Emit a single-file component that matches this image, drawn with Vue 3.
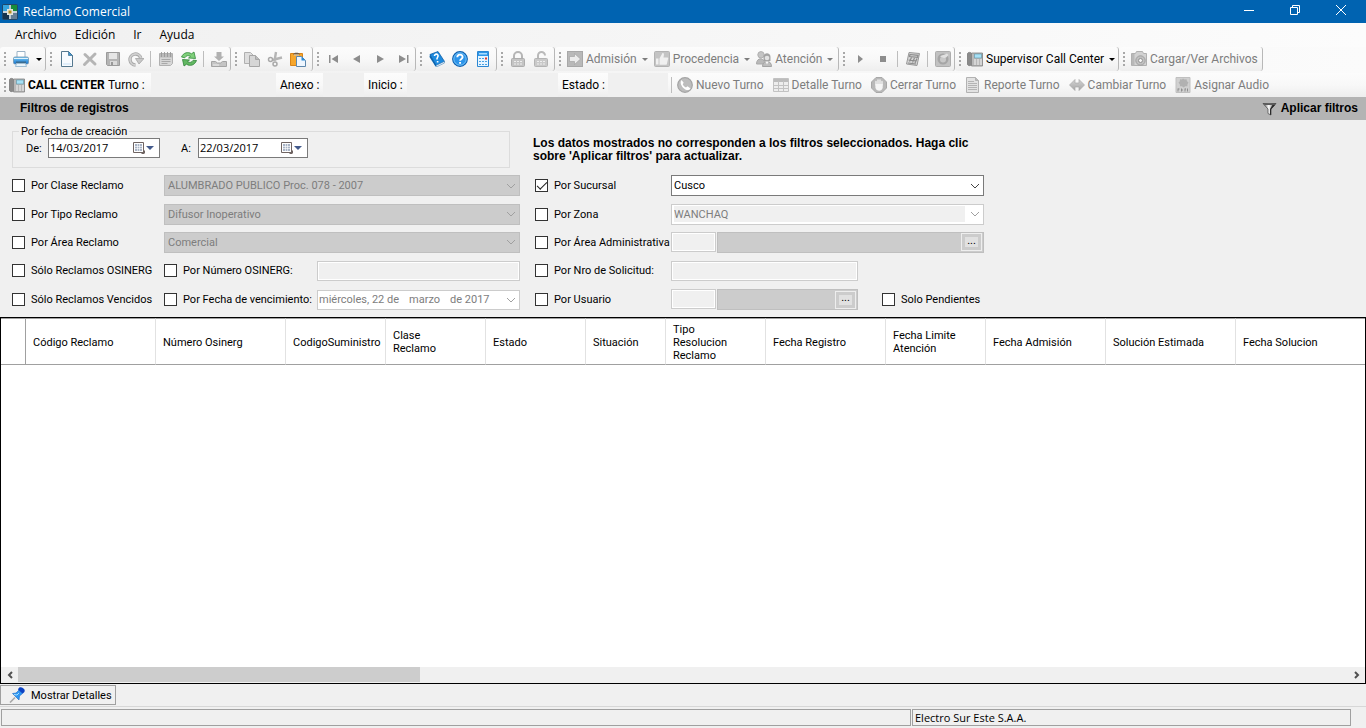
<script setup>
import { ref } from 'vue'

const menus = ['Archivo', 'Edición', 'Ir', 'Ayuda']

const groups = [
  { name: 'print', items: [{ icon: 'print', title: 'Imprimir', arrow: true, on: true }] },
  {
    name: 'edit',
    items: [
      { icon: 'new', title: 'Nuevo', on: true },
      { icon: 'delete', title: 'Eliminar' },
      { icon: 'save', title: 'Guardar' },
      { icon: 'undo', title: 'Deshacer' },
      { sep: true },
      { icon: 'form', title: 'Formulario' },
      { icon: 'refresh', title: 'Actualizar', on: true },
      { sep: true },
      { icon: 'export', title: 'Exportar' }
    ]
  },
  {
    name: 'clip',
    items: [
      { icon: 'copy', title: 'Copiar' },
      { icon: 'cut', title: 'Cortar' },
      { icon: 'paste', title: 'Pegar', on: true }
    ]
  },
  {
    name: 'nav',
    items: [
      { icon: 'first', title: 'Primero' },
      { icon: 'prev', title: 'Anterior' },
      { icon: 'next', title: 'Siguiente' },
      { icon: 'last', title: 'Último' }
    ]
  },
  {
    name: 'help',
    items: [
      { icon: 'book', title: 'Manual', on: true },
      { icon: 'help', title: 'Ayuda', on: true },
      { icon: 'calc', title: 'Calculadora', on: true }
    ]
  },
  {
    name: 'lock',
    items: [
      { icon: 'lock', title: 'Bloquear' },
      { icon: 'unlock', title: 'Desbloquear' }
    ]
  },
  {
    name: 'flow',
    items: [
      { icon: 'admit', label: 'Admisión', arrow: true },
      { icon: 'thumb', label: 'Procedencia', arrow: true },
      { icon: 'people', label: 'Atención', arrow: true }
    ]
  },
  {
    name: 'play',
    items: [
      { icon: 'play', title: 'Iniciar' },
      { icon: 'stop', title: 'Detener' },
      { sep: true },
      { icon: 'cards', title: 'Fichas' },
      { sep: true },
      { icon: 'disc', title: 'Grabación' }
    ]
  },
  { name: 'super', items: [{ icon: 'phone', label: 'Supervisor Call Center', arrow: true, on: true }] },
  { name: 'files', items: [{ icon: 'camera', label: 'Cargar/Ver Archivos' }] }
]

const callFields = [
  { id: 'turno', label: 'Turno :' },
  { id: 'anexo', label: 'Anexo :' },
  { id: 'inicio', label: 'Inicio :' },
  { id: 'estado', label: 'Estado :' }
]

const callActions = [
  { icon: 'call', label: 'Nuevo Turno' },
  { icon: 'table', label: 'Detalle Turno' },
  { icon: 'hand', label: 'Cerrar Turno' },
  { icon: 'report', label: 'Reporte Turno' },
  { icon: 'swap', label: 'Cambiar Turno' },
  { icon: 'audio', label: 'Asignar Audio' }
]

const from = ref('14/03/2017')
const to = ref('22/03/2017')

const combos = [
  { id: 'clase', label: 'Por Clase Reclamo', value: 'ALUMBRADO PUBLICO Proc. 078 - 2007' },
  { id: 'tipo', label: 'Por Tipo Reclamo', value: 'Difusor Inoperativo' },
  { id: 'area', label: 'Por Área Reclamo', value: 'Comercial' }
]

const columns = [
  { text: 'Código Reclamo', cls: 'w130' },
  { text: 'Número Osinerg', cls: 'w130' },
  { text: 'CodigoSuministro', cls: 'w100' },
  { text: 'Clase\nReclamo', cls: 'w100' },
  { text: 'Estado', cls: 'w100' },
  { text: 'Situación', cls: 'w80' },
  { text: 'Tipo\nResolucion\nReclamo', cls: 'w100' },
  { text: 'Fecha Registro', cls: 'w120' },
  { text: 'Fecha Limite\nAtención', cls: 'w100' },
  { text: 'Fecha Admisión', cls: 'w120' },
  { text: 'Solución Estimada', cls: 'w130' },
  { text: 'Fecha Solucion', cls: 'rest' }
]
</script>

<template>
  <div class="window">
    <svg class="defs" aria-hidden="true">
      <defs>
        <linearGradient id="g-gray" x1="0" y1="0" x2="0" y2="1">
          <stop offset="0" stop-color="#d4d4d4" /><stop offset="1" stop-color="#a6a6a6" />
        </linearGradient>
        <linearGradient id="g-blue" x1="0" y1="0" x2="0" y2="1">
          <stop offset="0" stop-color="#7ccdf6" /><stop offset="1" stop-color="#1272cf" />
        </linearGradient>
        <linearGradient id="g-steel" x1="0" y1="0" x2="1" y2="0">
          <stop offset="0" stop-color="#555555" /><stop offset="0.450" stop-color="#ffffff" /><stop offset="1" stop-color="#222222" />
        </linearGradient>
      </defs>
      <symbol id="i-app" viewBox="0 0 16 16">
        <rect width="16" height="16" rx="2" fill="#20486a" />
        <path d="M1 1h6v6H1z" fill="#36a4dd" /><path d="M9 1h6v6H9z" fill="#178c3a" />
        <path d="M1 9h6v6H1z" fill="#17334d" /><path d="M9 9h6v6H9z" fill="#647f95" />
        <path d="M8 1v14M1 8h14" stroke="#fff" stroke-width="1.4" />
        <path d="M5 5h6v6H5z" fill="#e4e6dc" /><path d="M6.5 6.500h3v3h-3z" fill="#b98a1d" />
      </symbol>
      <symbol id="i-print" viewBox="0 0 16 16">
        <path d="M4 .500h8v6H4z" fill="#fff" stroke="#9bb3c6" />
        <rect x="0.500" y="6" width="15" height="7" rx="1.500" fill="url(#g-blue)" stroke="#6f93ad" stroke-width=".8" />
        <path d="M1 7.500h14" stroke="#dff3fd" />
        <path d="M3 10.500h10v1.500H3z" fill="#3c6c90" />
        <path d="M3.500 12.500h9l1 3h-11z" fill="#e9f4fb" stroke="#9fbdd2" />
      </symbol>
      <symbol id="i-new" viewBox="0 0 16 16">
        <path d="M2.500.500h7l4 4v11h-11z" fill="#f7fbff" stroke="#55788f" />
        <path d="M9.500.500v4h4z" fill="#3f98d2" stroke="#3c6d8f" stroke-width=".7" />
        <path d="M4 12h8v2H4z" fill="#e0eefa" />
      </symbol>
      <symbol id="i-delete" viewBox="0 0 16 16">
        <path d="M3 3.500l10 9.500M13 3l-10.500 10.500" stroke="#b5b5b5" stroke-width="3" stroke-linecap="round" />
      </symbol>
      <symbol id="i-save" viewBox="0 0 16 16">
        <path d="M1.500 1.500h13v13h-12l-1-1z" fill="#b4b4b4" stroke="#9b9b9b" />
        <path d="M4 2h8v6H4z" fill="#e6e6e6" /><path d="M5 10h7v4H5z" fill="#dadada" /><path d="M6 11h2v3H6z" fill="#999" />
      </symbol>
      <symbol id="i-undo" viewBox="0 0 16 16">
        <path d="M7.500 14A5.500 5.500 0 1 1 12.800 7" fill="none" stroke="#a8a8a8" stroke-width="3.400" />
        <path d="M7.500 14A5.500 5.500 0 1 1 12.800 7" fill="none" stroke="#d0d0d0" stroke-width="1.800" />
        <path d="M7.500 7.500h8.500l-5 5.500z" fill="#c8c8c8" stroke="#a5a5a5" stroke-width=".8" />
      </symbol>
      <symbol id="i-form" viewBox="0 0 16 16">
        <path d="M1.500 2.500h13v10l-2 2h-11z" fill="#d6d6d6" stroke="#b0b0b0" />
        <path d="M2 3h12v3.500H2z" fill="#bbbbbb" />
        <path d="M3.500 1v5M6.500 1v5M9.500 1v5M12.500 1v5" stroke="#999" stroke-width=".9" />
        <path d="M3.500 8.500h9M3.500 10.500h9M3.500 12.500h6" stroke="#a8a8a8" />
      </symbol>
      <symbol id="i-refresh" viewBox="0 0 16 16">
        <path d="M.500 6C2.500 1.500 7 .500 10.500 2.800L13 1l1.500 6.500-7-.5 2-1.700C7.500 4 5 4.500 3.800 6.800z" fill="#7fcf7a" stroke="#348a3c" stroke-width=".8" />
        <path d="M15.500 9.500c-2 5-6.500 6-10 3.700L3 15 1.500 8.500l7 .5-2 1.700c2 1.300 4.500.800 5.700-1.500z" fill="#62b862" stroke="#2d8136" stroke-width=".8" />
      </symbol>
      <symbol id="i-export" viewBox="0 0 16 16">
        <path d="M5.500 1h5v4.500H13L8 10 3 5.500h2.500z" fill="#b1b1b1" />
        <path d="M.500 10.500h4l2 1.500h3l2-1.500h4v5H.500z" fill="#c4c4c4" stroke="#a4a4a4" />
        <path d="M2 14h6" stroke="#eee" />
      </symbol>
      <symbol id="i-copy" viewBox="0 0 16 16">
        <path d="M.500 1.500h6l3 3v8h-9z" fill="#dedede" stroke="#b0b0b0" />
        <path d="M5.500 4.500h6l4 4v7h-10z" fill="#d6d6d6" stroke="#a6a6a6" /><path d="M11.500 4.500v4h4" fill="#bbb" stroke="#a6a6a6" />
      </symbol>
      <symbol id="i-cut" viewBox="0 0 16 16">
        <path d="M9 1L7.500 10M15 6.500L5.500 9" stroke="#b5b5b5" stroke-width="2.400" />
        <circle cx="3.500" cy="8.500" r="2" fill="none" stroke="#a9a9a9" stroke-width="1.500" />
        <circle cx="8" cy="13" r="2" fill="none" stroke="#a9a9a9" stroke-width="1.500" />
      </symbol>
      <symbol id="i-paste" viewBox="0 0 16 16">
        <path d="M.500 2.500h12v12H.500z" fill="#f6a62c" stroke="#d9841a" />
        <path d="M3 3.500C3.500 1 9.500 1 10 3.500z" fill="#6c5a4a" /><path d="M4 3.500h5v1H4z" fill="#ccc" />
        <path d="M6.500 5.500h5l4 4v6h-9z" fill="#eef6ff" stroke="#5e87ac" /><path d="M11.500 5.500v4h4z" fill="#2a8bd8" />
      </symbol>
      <symbol id="i-first" viewBox="0 0 16 16"><path d="M3 4h1.500v8H3zM12 4v8L5.500 8z" fill="#8d8d8d" /></symbol>
      <symbol id="i-prev" viewBox="0 0 16 16"><path d="M11 4v8L4 8z" fill="#8d8d8d" /></symbol>
      <symbol id="i-next" viewBox="0 0 16 16"><path d="M5 4v8l7-4z" fill="#8d8d8d" /></symbol>
      <symbol id="i-last" viewBox="0 0 16 16"><path d="M12 4h1.500v8H12zM4 4v8l7-4z" fill="#8d8d8d" /></symbol>
      <symbol id="i-book" viewBox="0 0 16 16">
        <path d="M1 3.500L9 .500l6.500 10-8.500 4.500z" fill="#1d8ade" stroke="#0c5fa8" stroke-width=".8" />
        <path d="M1 3.500L.500 6l6 9.500 1-1z" fill="#0b64af" /><path d="M7 14.500l8.300-4 .2 1.500-8.300 4z" fill="#fff" stroke="#3f80b5" stroke-width=".6" />
        <path d="M5.500 5C5.500 2.500 9.500 2.500 9 5.200 8.800 6.500 7.800 6.500 8 8.500M8.600 10v1.500" fill="none" stroke="#fff" stroke-width="1.600" />
      </symbol>
      <symbol id="i-help" viewBox="0 0 16 16">
        <circle cx="8" cy="8" r="7.300" fill="#2c94ea" stroke="#0d5fae" stroke-width="1.200" />
        <circle cx="8" cy="8" r="6.200" fill="none" stroke="#85cbf8" stroke-width=".8" />
        <path d="M5.300 6.300C5.300 2.800 10.700 2.800 10.600 6.100 10.500 8 8.200 7.800 8.100 9.800M8.100 11v1.800" fill="none" stroke="#fff" stroke-width="1.900" />
      </symbol>
      <symbol id="i-calc" viewBox="0 0 16 16">
        <path d="M2.500.500h11v15h-11z" fill="#e8f5ff" stroke="#2b87d3" /><path d="M3 1h10v4H3z" fill="#2f96e8" /><path d="M4 2h8v1.500H4z" fill="#aadcff" />
        <path d="M4 7h2v1H4zM7 7h2v1H7zM4 10h2v1H4zM7 10h2v1H7zM10 10h2v1h-2zM4 13h2v1H4zM7 13h2v1H7zM10 13h2v1h-2z" fill="#4ba3e4" />
        <path d="M10 6.500h2v2h-2z" fill="#e0352b" />
      </symbol>
      <symbol id="i-lock" viewBox="0 0 16 16">
        <path d="M4 8V5a4 4 0 0 1 8 0v3" fill="none" stroke="#b5b5b5" stroke-width="2" />
        <rect x="1.500" y="7.500" width="13" height="8" rx="1" fill="#c4c4c4" stroke="#adadad" />
        <path d="M4 10.500h8M4 13h8" stroke="#eee" stroke-dasharray="2 1" />
      </symbol>
      <symbol id="i-unlock" viewBox="0 0 16 16">
        <path d="M5 8V4.500a3.500 3.500 0 0 1 7 0" fill="none" stroke="#b9b9b9" stroke-width="2" />
        <rect x="1.500" y="7.500" width="13" height="8" rx="1" fill="#c9c9c9" stroke="#b4b4b4" />
        <path d="M4 10.500h8M4 13h8" stroke="#eee" stroke-dasharray="2 1" />
      </symbol>
      <symbol id="i-admit" viewBox="0 0 16 16">
        <rect x=".500" y=".500" width="15" height="15" fill="#b9b9b9" stroke="#a8a8a8" />
        <path d="M2.500 5.500h5v-3l6 5.500-6 5.500v-3h-5z" fill="#ececec" stroke="#9e9e9e" stroke-width=".6" />
      </symbol>
      <symbol id="i-thumb" viewBox="0 0 16 16">
        <rect x=".500" y=".500" width="15" height="15" rx="1" fill="#c4c4c4" stroke="#b3b3b3" />
        <path d="M2 7.500h2.500v6H2zM5.500 7.500L8.500 2c2 0 1.500 2 1 4.500h4c1 0 .800 1.500.400 2l-1 4.500c-.300.700-.700.800-1.200.800H5.500z" fill="#f0f0f0" />
      </symbol>
      <symbol id="i-people" viewBox="0 0 16 16">
        <circle cx="5" cy="3.800" r="3.200" fill="#c4c4c4" stroke="#b0b0b0" /><path d="M.500 13c0-7 8-7 8.500 0z" fill="#b9b9b9" stroke="#a8a8a8" />
        <path d="M7.500 10V6c0-5 7-5 7 0v4z" fill="#a3a3a3" /><circle cx="11" cy="7" r="2.300" fill="#e2e2e2" />
        <path d="M6.500 15.500c0-7 9-7 9 0z" fill="#bdbdbd" stroke="#a3a3a3" /><path d="M9.500 10.500l1.500 3 1.500-3z" fill="#fafafa" />
      </symbol>
      <symbol id="i-play" viewBox="0 0 16 16"><path d="M6 4v8l5-4z" fill="#8d8d8d" /></symbol>
      <symbol id="i-stop" viewBox="0 0 16 16"><path d="M5 5h6v6H5z" fill="#8d8d8d" /></symbol>
      <symbol id="i-cards" viewBox="0 0 16 16">
        <path d="M4 1.500L14.500 2.500 12 14.500 1.500 13z" fill="#d6d6d6" stroke="#999" />
        <path d="M5 3.500l8 .800-.500 2-8-.800zM6.500 6.500l-2 4M9.500 7l-2 4.500M12 7.500l-2 4.500M3.500 9l8 1M3 12l8 1" fill="none" stroke="#8c8c8c" stroke-width="1.200" />
      </symbol>
      <symbol id="i-disc" viewBox="0 0 16 16">
        <rect x=".500" y=".500" width="15" height="15" rx="1" fill="#c1c1c1" stroke="#adadad" />
        <circle cx="8" cy="8" r="5.500" fill="#a5a5a5" /><circle cx="8" cy="8.500" r="3" fill="#c8c8c8" />
        <path d="M5 5.500c2-2 4-1 7-3l1.500 1.500c-2 2-2 3-4.500 3z" fill="#e0e0e0" />
      </symbol>
      <symbol id="i-phone" viewBox="0 0 16 16">
        <path d="M0.500 2.500C1 1 4 1 4.500 2.500v11C4 15 1 15 .500 13.500z" fill="#8a8a8a" stroke="#6f6f6f" stroke-width=".7" />
        <path d="M4.500 2h11v13h-11z" fill="#b8b8b8" stroke="#808080" stroke-width=".8" /><path d="M7.500 3h7v4h-7z" fill="#a6e0f5" stroke="#5e93a6" stroke-width=".6" />
        <path d="M7 9h8M7 11h8M7 13h8" stroke="#f2f2f2" stroke-dasharray="2 1" />
      </symbol>
      <symbol id="i-camera" viewBox="0 0 16 16">
        <path d="M.500 2.500h4l1-2h6l1 2h3v12H.500z" fill="#d2d2d2" stroke="#b0b0b0" /><path d="M1 3h2.500v11.500H1z" fill="#b8b8b8" />
        <circle cx="9.500" cy="9.500" r="4.700" fill="#c0c0c0" stroke="#a0a0a0" /><circle cx="9.500" cy="9.500" r="2" fill="#f4f4f4" stroke="#929292" />
      </symbol>
      <symbol id="i-call" viewBox="0 0 16 16">
        <circle cx="8" cy="8" r="7.300" fill="#bdbdbd" stroke="#a4a4a4" stroke-width="1.200" />
        <path d="M4.500 3l2.200 2.700-1 1.500c.700 1.500 1.700 2.500 3.200 3.200L10.500 9.300l3 2.200c-1.500 2-4 2-6.500 0S2.500 5.500 4.500 3z" fill="#fff" />
      </symbol>
      <symbol id="i-table" viewBox="0 0 16 16">
        <path d="M.500 1.500h15v13H.500z" fill="#ededed" stroke="#c2c2c2" /><path d="M1 2h14v3H1z" fill="#bcbcbc" />
        <path d="M1 8.500h14M1 11.500h14M5.500 4v10M10.500 4v10" stroke="#c2c2c2" />
      </symbol>
      <symbol id="i-hand" viewBox="0 0 16 16">
        <path d="M5 .500h6l4.500 4.500v6L11 15.500H5L.500 11V5z" fill="#b9b9b9" stroke="#a8a8a8" />
        <path d="M5 8V4.500M7 7V3M9 7V3M11 8V4.500" stroke="#f6f6f6" stroke-width="1.300" stroke-linecap="round" />
        <path d="M4.400 7h7.300v3.500c0 4-6.500 4.500-7.300 0z" fill="#f6f6f6" />
      </symbol>
      <symbol id="i-report" viewBox="0 0 16 16">
        <path d="M1.500.500h9l3 3v12h-12z" fill="#e2e2e2" stroke="#b2b2b2" /><path d="M10.500.500v3h3" fill="#bbb" stroke="#b2b2b2" />
        <path d="M3 4.500h6M3 6.500h9M3 8.500h9M3 10.500h9M3 12.500h9" stroke="#b4b4b4" />
      </symbol>
      <symbol id="i-swap" viewBox="0 0 16 16"><path d="M.500 8L6 2.500V6h4V2.500L15.500 8 10 13.500V10H6v3.500z" fill="url(#g-gray)" stroke="#a9a9a9" stroke-width=".7" /></symbol>
      <symbol id="i-audio" viewBox="0 0 16 16">
        <path d="M1 .500h14v15H1z" fill="#d0d0d0" stroke="#c0c0c0" />
        <path d="M8 1.500l1.500 1 2-.2.500 2 1.500 1.200-1 1.700-.2 2-2 .1L8.500 10.500 7 9.300H5l-.2-2-1.300-1.600 1.300-1.400.2-2 2 .2z" fill="#b1b1b1" />
        <path d="M3 11.500v3M3 12h1.500M6.500 11.500v3M6.500 13h1.500M10 11.500v3M10 12h1M12.500 11.500v3" stroke="#8e8e8e" />
      </symbol>
      <symbol id="i-filter" viewBox="0 0 16 16">
        <path d="M2 2.500h13l-5 5.500v6l-3-1.500V8z" fill="url(#g-steel)" stroke="#3f3f3f" stroke-width=".7" />
        <path d="M2.500 2.500h12l-1.500 1.500H4z" fill="#5a5a5a" />
        <path d="M10 8.500l4-4.500h-2.500L9 8v5.500l1 .5z" fill="#2a2a2a" />
      </symbol>
      <symbol id="i-calendar" viewBox="0 0 12 12">
        <path d="M.500.500h10v10H.500z" fill="#fff" stroke="#6f6462" /><path d="M2 2h7v7H2z" fill="#a9b4c6" />
        <path d="M2 4.500h7M2 6.500h7M4.500 2v7M6.500 2v7" stroke="#fff" stroke-width=".6" /><path d="M8 12L12 8v3l-1 1z" fill="#6f6462" />
      </symbol>
      <symbol id="i-pin" viewBox="0 0 16 16">
        <path d="M1 15.500L6 10.500" stroke="#a8a8a8" stroke-width="1.600" />
        <path d="M3.500 6.500L7 6l3-3 3.500 3.500-3 2.500-.500 4z" fill="#2e96f2" stroke="#1767c4" stroke-width=".6" />
        <path d="M9 2.500C10-.500 12.500 0 14.500 1.500s1.500 4-1 5z" fill="#0d43c4" /><path d="M5 7.500l3 .500 2-2" stroke="#a5e0ff" fill="none" />
      </symbol>
    </svg>

    <header class="titlebar">
      <svg class="ico"><use href="#i-app" /></svg>
      <h1>Reclamo Comercial</h1>
      <div class="winbtns">
        <button type="button" aria-label="Minimizar"><svg viewBox="0 0 12 12"><path d="M1 6.500h10" /></svg></button>
        <button type="button" aria-label="Restaurar"><svg viewBox="0 0 12 12"><path d="M1.500 3.500h7v7h-7zM3.500 3.500v-2h7v7h-2" /></svg></button>
        <button type="button" aria-label="Cerrar"><svg viewBox="0 0 12 12"><path d="M1 1l10 10M11 1L1 11" /></svg></button>
      </div>
    </header>

    <nav class="menubar">
      <button v-for="m in menus" :key="m" type="button">{{ m }}</button>
    </nav>

    <div class="toolbars">
      <div v-for="g in groups" :key="g.name" class="strip" :class="g.name">
        <i class="grip"></i>
        <template v-for="(it, n) in g.items" :key="n">
          <i v-if="it.sep" class="sep"></i>
          <button v-else type="button" class="tool" :class="{ wide: it.label }" :disabled="!it.on" :aria-label="it.title">
            <svg class="ico"><use :href="'#i-' + it.icon" /></svg>
            <span v-if="it.label">{{ it.label }}</span>
            <i v-if="it.arrow" class="arrow"></i>
          </button>
        </template>
      </div>
    </div>

    <div class="callbar">
      <i class="grip"></i>
      <strong><svg class="ico"><use href="#i-phone" /></svg>CALL CENTER</strong>
      <template v-for="f in callFields" :key="f.id">
        <label :for="f.id">{{ f.label }}</label>
        <input :id="f.id" type="text" readonly />
      </template>
      <i class="sep"></i>
      <button v-for="a in callActions" :key="a.icon" type="button" class="tool wide" disabled>
        <svg class="ico"><use :href="'#i-' + a.icon" /></svg>
        <span>{{ a.label }}</span>
      </button>
    </div>

    <div class="filterbar">
      <h2>Filtros de registros</h2>
      <button type="button"><svg class="ico"><use href="#i-filter" /></svg>Aplicar filtros</button>
    </div>

    <section class="filters">
      <div class="side left">
        <fieldset>
          <legend>Por fecha de creación</legend>
          <label for="de">De:</label>
          <span class="date"><input id="de" v-model="from" type="text" /><svg><use href="#i-calendar" /></svg><i class="arrow"></i></span>
          <label for="a" class="second">A:</label>
          <span class="date"><input id="a" v-model="to" type="text" /><svg><use href="#i-calendar" /></svg><i class="arrow"></i></span>
        </fieldset>
        <div class="rows">
          <template v-for="c in combos" :key="c.id">
            <label class="check"><input type="checkbox" />{{ c.label }}</label>
            <span class="combo gray span2">
              <select disabled :aria-label="c.label"><option>{{ c.value }}</option></select>
              <svg viewBox="0 0 10 6"><path d="M1 1l4 4 4-4" /></svg>
            </span>
          </template>
          <label class="check"><input type="checkbox" />Sólo Reclamos OSINERG</label>
          <label class="check"><input type="checkbox" />Por Número OSINERG:</label>
          <input class="box" type="text" disabled aria-label="Número OSINERG" />
          <label class="check"><input type="checkbox" />Sólo Reclamos Vencidos</label>
          <label class="check"><input type="checkbox" />Por Fecha de vencimiento:</label>
          <span class="combo off">
            <span class="longdate"><span>miércoles, 22 de</span><span>marzo</span><span>de 2017</span></span>
            <svg viewBox="0 0 10 6"><path d="M1 1l4 4 4-4" /></svg>
          </span>
        </div>
      </div>

      <div class="side right">
        <p>Los datos mostrados no corresponden a los filtros seleccionados. Haga clic sobre 'Aplicar filtros' para actualizar.</p>
        <div class="rows">
          <label class="check"><input type="checkbox" checked />Por Sucursal</label>
          <span class="combo live">
            <select aria-label="Sucursal"><option>Cusco</option></select>
            <svg viewBox="0 0 10 6"><path d="M1 1l4 4 4-4" /></svg>
          </span>
          <label class="check"><input type="checkbox" />Por Zona</label>
          <span class="combo off zone">
            <select disabled aria-label="Zona"><option>WANCHAQ</option></select>
            <svg viewBox="0 0 10 6"><path d="M1 1l4 4 4-4" /></svg>
          </span>
          <label class="check"><input type="checkbox" />Por Área Administrativa</label>
          <div class="lookup">
            <input class="box" type="text" disabled aria-label="Código de área" />
            <span class="desc"><button type="button" disabled>...</button></span>
          </div>
          <label class="check"><input type="checkbox" />Por Nro de Solicitud:</label>
          <input class="box short" type="text" disabled aria-label="Nro de Solicitud" />
          <label class="check"><input type="checkbox" />Por Usuario</label>
          <div class="userrow">
            <div class="lookup short">
              <input class="box" type="text" disabled aria-label="Código de usuario" />
              <span class="desc"><button type="button" disabled>...</button></span>
            </div>
            <label class="check"><input type="checkbox" />Solo Pendientes</label>
          </div>
        </div>
      </div>
    </section>

    <main class="grid">
      <div class="tablewrap">
        <table>
          <thead>
            <tr>
              <th class="rowhead"></th>
              <th v-for="c in columns" :key="c.text" :class="c.cls">{{ c.text }}</th>
            </tr>
          </thead>
        </table>
      </div>
      <div class="scroll">
        <button type="button" aria-label="Izquierda"><svg viewBox="0 0 8 8"><path d="M6 1L3 4l3 3" /></svg></button>
        <div class="track"><div class="thumb"></div></div>
        <button type="button" aria-label="Derecha"><svg viewBox="0 0 8 8"><path d="M2 1l3 3-3 3" /></svg></button>
      </div>
    </main>

    <div class="details">
      <button type="button"><svg class="ico"><use href="#i-pin" /></svg>Mostrar Detalles</button>
    </div>
    <footer class="status">
      <div></div>
      <div class="company">Electro Sur Este S.A.A.</div>
    </footer>
  </div>
</template>

<style>
body {
  margin: 0;
  background: #f0f0f0;
}
</style>

<style scoped>
.window {
  display: flex;
  flex-direction: column;
  min-height: 100vh;
  overflow: hidden;
  background: #f0f0f0;
  color: #000;
  font: 11px/13px Roboto, "Liberation Sans", sans-serif;
}
.window * {
  box-sizing: border-box;
}
.defs {
  position: absolute;
  width: 0;
  height: 0;
}
button,
input,
select {
  margin: 0;
  padding: 0;
  border: 0;
  background: none;
  color: inherit;
  font: inherit;
  border-radius: 0;
}
h1, h2, p { margin: 0; font-size: 11px; }
.ico {
  width: 16px;
  height: 16px;
  flex: none;
}
.titlebar {
  display: flex;
  align-items: center;
  height: 23px;
  padding: 0 2px;
  gap: 5px;
  background: #0063b1;
  color: #fff;
}
.titlebar h1 {
  font: 12px/16px "Open Sans", sans-serif;
  flex: 1;
}
.winbtns { display: flex; }
.winbtns button {
  width: 46px;
  height: 20px;
}
.winbtns svg {
  width: 12px;
  height: 12px;
  fill: none;
  stroke: #fff;
}
.menubar {
  display: flex;
  align-items: center;
  gap: 18px;
  height: 24px;
  padding-left: 15px;
  background: linear-gradient(90deg, #f0f0f0, #fcfcfc);
  font: 12px/16px "Open Sans", sans-serif;
}
.toolbars,
.callbar {
  font: 12px/16px Roboto, "Open Sans", sans-serif;
}
.toolbars {
  display: grid;
  grid-template-columns: 46px 185px 82px 103px 81px 58px 284px 116px 164px 144px;
  height: 26px;
  background: linear-gradient(90deg, #f0f0f0, #fbfbfb);
}
.strip {
  display: flex;
  align-items: center;
  height: 24px;
  padding-left: 4px;
  border-right: 1px solid #b8b8b8;
  border-radius: 3px;
  background: linear-gradient(#fcfcfc, #f8f8f8 50%, #eeeeee);
}
.grip {
  flex: none;
  width: 2px;
  height: 14px;
  margin-right: 3px;
  background: repeating-linear-gradient(#a8a8a8 0 2px, transparent 2px 4px);
}
.sep {
  flex: none;
  width: 1px;
  height: 16px;
  margin: 0 3px;
  background: #bdbdbd;
}
.tool {
  display: flex;
  align-items: center;
  justify-content: center;
  flex: none;
  width: 23px;
  height: 22px;
  white-space: nowrap;
}
.tool.wide {
  width: auto;
  gap: 3px;
  padding-left: 3px;
}
.tool:disabled { color: #7d7d7d; }
.arrow {
  flex: none;
  width: 0;
  height: 0;
  border: 3px solid transparent;
  border-top-color: currentColor;
  border-bottom: 0;
}
.strip.print .tool { width: 36px; gap: 5px; }
.tool .arrow { margin-left: 2px; }
.flow .wide:nth-of-type(n + 2) { padding-left: 6px; }
.callbar {
  display: flex;
  align-items: center;
  height: 24px;
  padding-left: 4px;
  background: linear-gradient(#fcfcfc, #f8f8f8 50%, #eeeeee);
}
.callbar strong {
  display: flex;
  align-items: center;
  gap: 3px;
  flex: none;
  width: 95px;
  font-weight: 700;
  white-space: nowrap;
}
.callbar label {
  flex: none;
  width: 47px;
  padding-left: 4px;
  white-space: nowrap;
}
.callbar label:nth-of-type(3) { width: 43px; }
.callbar label:nth-of-type(4) { width: 50px; }
.callbar input {
  flex: none;
  height: 24px;
  background: #f0f0f0;
}
#turno { width: 125px; }
#anexo { width: 41px; }
#inicio { width: 151px; }
#estado { width: 60px; }
.callbar .tool { padding: 0 7px 0 2px; }
.filterbar {
  display: flex;
  align-items: center;
  justify-content: space-between;
  height: 23px;
  padding: 0 8px 0 20px;
  background: #b4b4b4;
}
.filterbar h2,
.filterbar button,
.right p {
  font: bold 12px/13px "Liberation Sans", sans-serif;
}
.filterbar button {
  display: flex;
  align-items: center;
  gap: 4px;
}
.filters {
  display: flex;
  gap: 15px;
  height: 197px;
  padding: 5px 12px 0;
}
.side { flex: none; }
.left { width: 508px; }
fieldset {
  display: flex;
  align-items: flex-start;
  width: 498px;
  height: 43px;
  margin: 0;
  padding: 0 0 0 13px;
  border: 1px solid #dcdcdc;
}
legend {
  margin-left: -7px;
  padding: 0 2px;
}
fieldset label {
  width: 22px;
  padding-top: 4px;
}
fieldset label.second { width: 17px; margin-left: 21px; }
.date {
  display: flex;
  align-items: center;
  width: 112px;
  height: 20px;
  padding-right: 5px;
  border: 1px solid #7a7a7a;
  background: #fff;
}
.second + .date { width: 110px; }
.date input {
  width: 70px;
  flex: 1;
  padding-left: 1px;
  font: 11px/16px "Open Sans", sans-serif;
}
.date svg {
  width: 12px;
  height: 12px;
  margin-right: 1px;
}
.date .arrow { color: #435a8c; border-width: 4px; border-bottom: 0; }
.rows {
  display: grid;
  grid-template-rows: 29px 28px 28px 29px 29px;
  align-items: center;
}
.left .rows {
  grid-template-columns: 152px 153px 203px;
  padding-top: 3px;
}
.right .rows {
  grid-template-columns: 136px 313px;
}
.span2 { grid-column: span 2; }
.check {
  display: flex;
  align-items: center;
  gap: 6px;
  white-space: nowrap;
}
.check input {
  display: grid;
  place-items: center;
  flex: none;
  width: 13px;
  height: 13px;
  border: 1px solid #333;
  background: #fff;
  appearance: none;
}
.check input:checked::after {
  content: "";
  width: 9px;
  height: 4px;
  margin-bottom: 2px;
  border: solid #222;
  border-width: 0 0 1px 1px;
  transform: rotate(-45deg);
}
.combo {
  display: flex;
  align-items: center;
  height: 21px;
  padding-right: 3px;
  border: 1px solid #7a7a7a;
  background: #fff;
}
.combo select {
  flex: 1;
  height: 16px;
  padding-left: 2px;
  appearance: none;
  opacity: 1;
}
.combo svg {
  flex: none;
  width: 10px;
  height: 6px;
  margin-left: 5px;
  fill: none;
  stroke: #444;
}
.combo.gray, .combo.off { color: #7d7d7d; }
.combo.gray { border-color: #bfbfbf; background: #cccccc; }
.combo.gray select { padding-left: 3px; }
.combo.off { border-color: #cccccc; }
.combo.gray svg, .combo.off svg { stroke: #a0a0a0; }
.combo.zone select { margin-left: 2px; padding-left: 0; background: #f0f0f0; }
.left .combo.off { height: 20px; }
.longdate {
  display: flex;
  flex: 1;
  gap: 10px;
  padding-left: 1px;
  white-space: nowrap;
}
.box {
  width: 100%;
  height: 20px;
  border: 1px solid #cccccc;
  background: #f0f0f0;
  box-shadow: inset 0 0 0 1px #fff;
}
.short { width: 187px; }
.right { width: 449px; }
.right p {
  width: 446px;
  height: 46px;
  padding-top: 12px;
  margin-left: -2px;
}
.lookup {
  display: flex;
  gap: 1px;
}
.lookup .box { width: 45px; flex: none; }
.desc {
  display: flex;
  align-items: center;
  justify-content: flex-end;
  flex: 1;
  height: 21px;
  padding-right: 1px;
  border: 1px solid #bfbfbf;
  background: #cccccc;
}
.desc button {
  width: 21px;
  height: 18px;
  padding-bottom: 3px;
  border: 1px solid #bfbfbf;
  outline: 1px solid #eeeeee;
  outline-offset: -1px;
  background: #e1e1e1;
  box-shadow: inset 0 0 0 3px #cccccc;
  line-height: 10px;
}
.userrow {
  display: flex;
  gap: 24px;
}
.userrow .lookup { flex: none; }
.grid {
  display: flex;
  flex-direction: column;
  flex: 1;
  border: 1px solid #000;
  background: #fff;
}
.tablewrap {
  flex: 1;
  overflow: hidden;
}
table {
  width: 100%;
  table-layout: fixed;
  border-collapse: separate;
  border-spacing: 0;
}
th {
  height: 47px;
  padding: 1px 0 0 7px;
  border-right: 1px solid #e2e2e2;
  border-bottom: 1px solid #a0a0a0;
  border-top: 1px solid #a0a0a0;
  font-weight: 400;
  text-align: left;
  white-space: pre;
}
.rowhead { width: 25px; border-right-color: #a0a0a0; }
.w80 { width: 80px; }
.w100 { width: 100px; }
.w120 { width: 120px; }
.w130 { width: 130px; }
.rest { border-right: 0; }
.scroll {
  display: flex;
  height: 16px;
  background: #f0f0f0;
}
.scroll button {
  display: grid;
  place-items: center;
  width: 17px;
  height: 16px;
}
.scroll svg {
  width: 8px;
  height: 8px;
  fill: none;
  stroke: #505050;
  stroke-width: 2;
}
.track { flex: 1; }
.thumb {
  width: 30.2%;
  height: 15px;
  background: #cdcdcd;
}
.details {
  height: 23px;
  padding-top: 1px;
  border-bottom: 1px solid #d7d7d7;
}
.details button {
  display: flex;
  align-items: center;
  gap: 6px;
  height: 20px;
  padding: 0 3px 0 8px;
  border: 1px solid #a0a0a0;
}
.status {
  display: flex;
  gap: 1px;
  padding: 2px 15px 2px 1px;
}
.status div {
  flex: 1;
  height: 17px;
  border: 1px solid #a0a0a0;
}
.status .company {
  flex: none;
  width: 439px;
  padding-left: 2px;
  font: 11px/15px "Open Sans", sans-serif;
}
</style>
